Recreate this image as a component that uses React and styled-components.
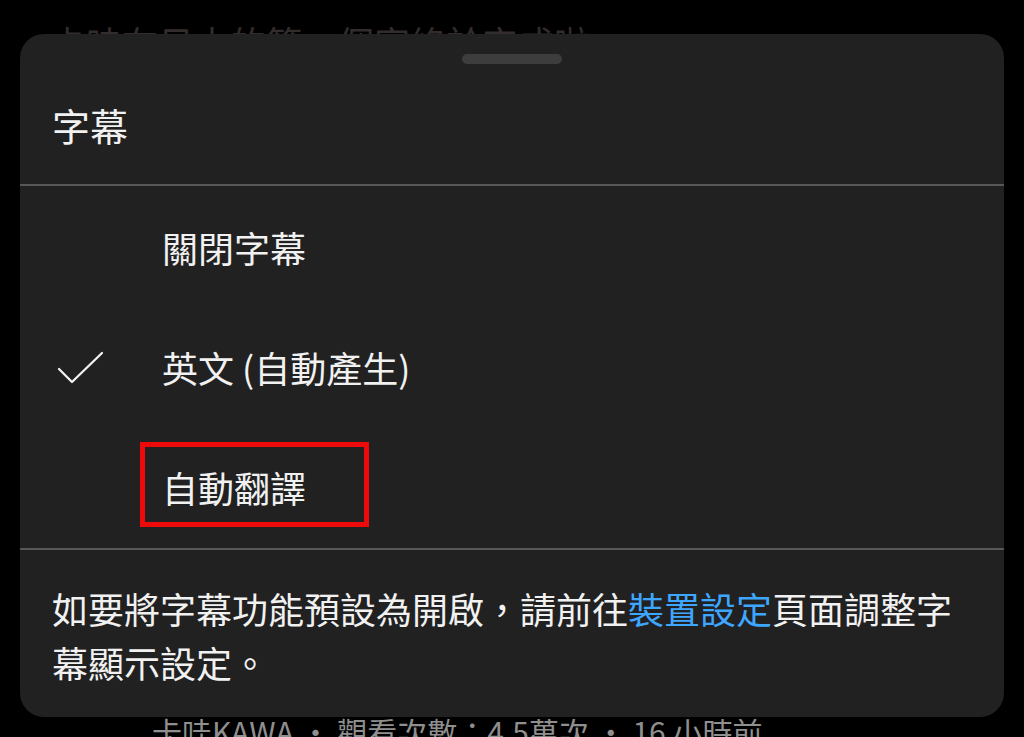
import React from 'react';
import styled, { createGlobalStyle } from 'styled-components';

const GlobalStyle = createGlobalStyle`
  html, body {
    margin: 0;
    padding: 0;
    background: #000;
  }
  body {
    font-family: "Noto Sans CJK TC", "Noto Sans", Roboto, sans-serif;
  }
`;

const options = [
  { label: '關閉字幕' },
  { label: '英文 (自動產生)', checked: true },
  { label: '自動翻譯', marked: true },
];

const CheckIcon = () => (
  <svg width="48" height="48" viewBox="0 0 48 48" fill="none">
    <polyline
      points="3,25 16,38 46,9"
      stroke="#f1f1f1"
      strokeWidth="2.3"
      strokeLinecap="round"
      strokeLinejoin="round"
    />
  </svg>
);

const App = () => {
  return (
    <Page>
      <GlobalStyle />
      <VideoTitle>卡哇在日本的第一個家終於完成啦</VideoTitle>
      <VideoMeta>卡哇KAWA · 觀看次數：4.5萬次 · 16 小時前</VideoMeta>

      <Sheet>
        <Header>
          <Handle />
          <TitleRow>
            <Title>字幕</Title>
          </TitleRow>
        </Header>
        <Divider />
        <OptionList>
          {options.map((opt) => (
            <OptionRow key={opt.label}>
              <CheckCell>{opt.checked && <CheckIcon />}</CheckCell>
              <OptionLabel $marked={opt.marked}>{opt.label}</OptionLabel>
            </OptionRow>
          ))}
        </OptionList>
        <Divider />
        <Footer>
          如要將字幕功能預設為開啟，請前往<Link>裝置設定</Link>頁面調整字幕顯示設定。
        </Footer>
      </Sheet>
    </Page>
  );
};

// Styled Components
const Page = styled.div`
  position: relative;
  width: 1024px;
  height: 737px;
  overflow: hidden;
  background: #000;
  display: flex;
  flex-direction: column;
  justify-content: space-between;
`;

const VideoTitle = styled.div`
  padding: 21px 0 0 50px;
  font-size: 36px;
  line-height: 1.2;
  color: #332c2c;
  white-space: nowrap;
`;

const VideoMeta = styled.div`
  padding-left: 152px;
  margin-bottom: -12px;
  font-size: 30px;
  line-height: 1.2;
  color: #8f8f8f;
  white-space: nowrap;
`;

const Sheet = styled.div`
  position: absolute;
  left: 20px;
  top: 34px;
  width: 984px;
  height: 683px;
  background: #212121;
  border-radius: 24px;
  display: flex;
  flex-direction: column;
  color: #f1f1f1;
`;

const Header = styled.div`
  height: 150px;
  display: flex;
  flex-direction: column;
  padding-top: 20px;
  box-sizing: border-box;
`;

const Handle = styled.div`
  align-self: center;
  width: 100px;
  height: 10px;
  border-radius: 5px;
  background: #3d3d3d;
`;

const TitleRow = styled.div`
  flex: 1;
  display: flex;
  align-items: center;
  padding: 2px 0 0 32px;
`;

const Title = styled.div`
  font-size: 38px;
  line-height: 1.2;
`;

const Divider = styled.div`
  height: 2px;
  background: #575757;
`;

const OptionList = styled.div`
  display: flex;
  flex-direction: column;
  padding-top: 2px;
`;

const OptionRow = styled.div`
  height: 120px;
  display: grid;
  grid-template-columns: 142px 1fr;
  align-items: center;
`;

const CheckCell = styled.div`
  display: flex;
  align-items: center;
  padding-left: 36px;
`;

const OptionLabel = styled.span`
  position: relative;
  justify-self: start;
  font-size: 36px;
  line-height: 1.2;

  ${({ $marked }) =>
    $marked &&
    `
    &::after {
      content: '';
      position: absolute;
      left: -22px;
      right: -63px;
      top: -24px;
      bottom: -17px;
      border: 5px solid #ee0a0a;
    }
  `}
`;

const Footer = styled.div`
  flex: 1;
  padding: 31px 32px 0 32px;
  font-size: 36px;
  line-height: 54px;
`;

const Link = styled.span`
  color: #3ea6ff;
`;

export default App;
